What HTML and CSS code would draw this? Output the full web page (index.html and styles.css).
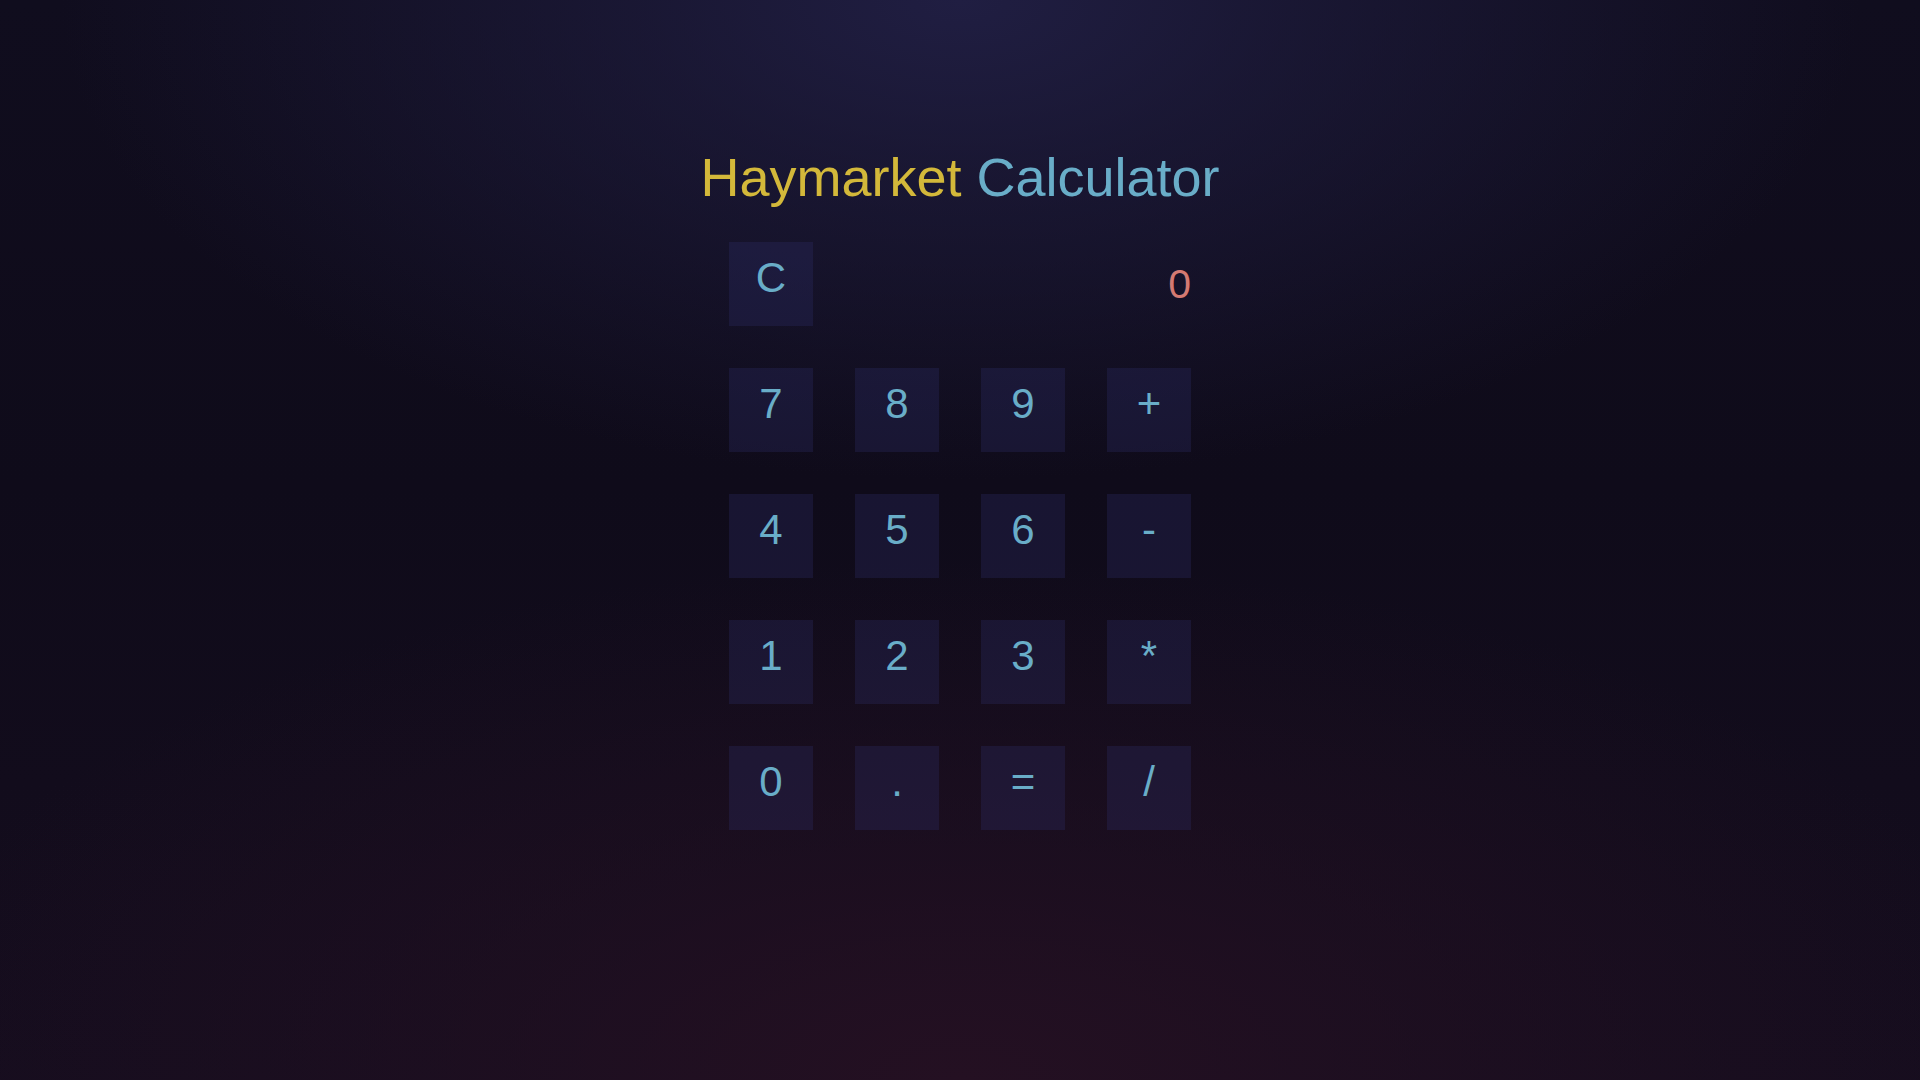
FILE: index.html
```html
<!DOCTYPE html>
<html lang="en">
<head>
<meta charset="utf-8">
<title>Haymarket Calculator</title>
<link rel="stylesheet" href="styles.css">
</head>
<body>
<main class="app">
  <h1 class="title"><span class="title-a">Haymarket</span> <span class="title-b">Calculator</span></h1>
  <div class="calc">
    <div class="key">C</div>
    <div class="display">0</div>
    <div class="key">7</div>
    <div class="key">8</div>
    <div class="key">9</div>
    <div class="key">+</div>
    <div class="key">4</div>
    <div class="key">5</div>
    <div class="key">6</div>
    <div class="key">-</div>
    <div class="key">1</div>
    <div class="key">2</div>
    <div class="key">3</div>
    <div class="key">*</div>
    <div class="key">0</div>
    <div class="key">.</div>
    <div class="key">=</div>
    <div class="key">/</div>
  </div>
</main>
</body>
</html>
```
FILE: styles.css
```css
html, body {
  margin: 0;
  height: 100%;
}
body {
  font-family: "Liberation Sans", Arial, sans-serif;
  background-color: #120c1d;
  background-image:
    radial-gradient(ellipse 900px 480px at 50% 0%, rgba(32, 30, 66, 1) 0%, rgba(32, 30, 66, 0.6) 35%, rgba(32, 30, 66, 0) 100%),
    radial-gradient(ellipse 1100px 520px at 50% 100%, rgba(36, 16, 34, 1) 0%, rgba(36, 16, 34, 0.5) 45%, rgba(36, 16, 34, 0) 100%),
    linear-gradient(180deg, #100d1e 0%, #0f0b1a 45%, #150d1e 100%);
  overflow: hidden;
}
.app {
  display: flex;
  flex-direction: column;
  align-items: center;
}
.title {
  margin: 146px 0 34px;
  font-size: 54px;
  font-weight: normal;
  line-height: normal;
}
.title-a { color: #d3b83a; }
.title-b { color: #69adc8; }
.calc {
  display: grid;
  grid-template-columns: repeat(4, 84px);
  grid-auto-rows: 84px;
  gap: 42px;
}
.key {
  box-sizing: border-box;
  padding-top: 12px;
  text-align: center;
  font-size: 42px;
  line-height: normal;
  color: #69adc8;
  background: rgba(45, 47, 107, 0.3);
}
.display {
  grid-column: 2 / 5;
  display: flex;
  align-items: center;
  justify-content: flex-end;
  font-size: 41px;
  color: #d47a72;
}
```
